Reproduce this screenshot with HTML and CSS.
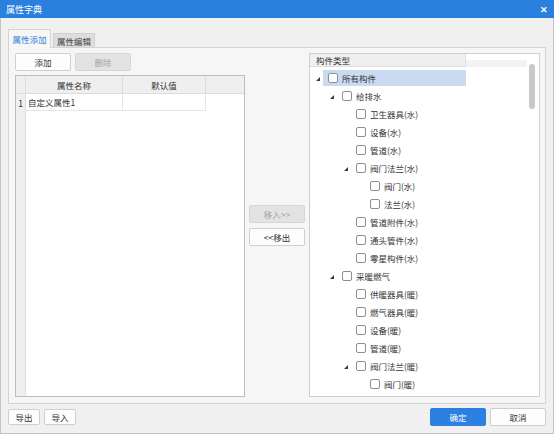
FILE: index.html
```html
<!DOCTYPE html>
<html lang="zh">
<head>
<meta charset="utf-8">
<title>属性字典</title>
<link rel="stylesheet" href="styles.css">
</head>
<body>
<div class="window">
  <div class="titlebar"><span>属性字典</span><span class="close">✕</span></div>
  <div class="frame">
    <div class="tabs">
      <div class="tab active">属性添加</div>
      <div class="tab">属性编辑</div>
    </div>
    <div class="panel">
      <div class="leftcol">
        <div class="btnrow">
          <div class="btn">添加</div>
          <div class="btn disabled">删除</div>
        </div>
        <div class="grid">
          <div class="c rh hd"></div>
          <div class="c hd">属性名称</div>
          <div class="c hd">默认值</div>
          <div class="c hd fill"></div>
          <div class="c rh">1</div>
          <div class="c cell left">自定义属性1</div>
          <div class="c cell"></div>
          <div class="c blank"></div>
          <div class="c rh rest"></div>
          <div class="c blank span3"></div>
        </div>
      </div>
      <div class="midcol">
        <div class="btn disabled mbtn">移入&gt;&gt;</div>
        <div class="btn mbtn">&lt;&lt;移出</div>
      </div>
      <div class="tree">
        <div class="tree-main">
          <div class="tree-head">
            <div class="th-cell">构件类型</div>
            <div class="th-fill"></div>
          </div>
          <div class="list">
            <div class="row lv0"><span class="exp"><i class="tri"></i></span><span class="item sel"><span class="cb"></span>所有构件</span></div>
            <div class="row lv1"><span class="exp"><i class="tri"></i></span><span class="item"><span class="cb"></span>给排水</span></div>
            <div class="row lv2"><span class="exp"></span><span class="item"><span class="cb"></span>卫生器具(水)</span></div>
            <div class="row lv2"><span class="exp"></span><span class="item"><span class="cb"></span>设备(水)</span></div>
            <div class="row lv2"><span class="exp"></span><span class="item"><span class="cb"></span>管道(水)</span></div>
            <div class="row lv2"><span class="exp"><i class="tri"></i></span><span class="item"><span class="cb"></span>阀门法兰(水)</span></div>
            <div class="row lv3"><span class="exp"></span><span class="item"><span class="cb"></span>阀门(水)</span></div>
            <div class="row lv3"><span class="exp"></span><span class="item"><span class="cb"></span>法兰(水)</span></div>
            <div class="row lv2"><span class="exp"></span><span class="item"><span class="cb"></span>管道附件(水)</span></div>
            <div class="row lv2"><span class="exp"></span><span class="item"><span class="cb"></span>通头管件(水)</span></div>
            <div class="row lv2"><span class="exp"></span><span class="item"><span class="cb"></span>零星构件(水)</span></div>
            <div class="row lv1"><span class="exp"><i class="tri"></i></span><span class="item"><span class="cb"></span>采暖燃气</span></div>
            <div class="row lv2"><span class="exp"></span><span class="item"><span class="cb"></span>供暖器具(暖)</span></div>
            <div class="row lv2"><span class="exp"></span><span class="item"><span class="cb"></span>燃气器具(暖)</span></div>
            <div class="row lv2"><span class="exp"></span><span class="item"><span class="cb"></span>设备(暖)</span></div>
            <div class="row lv2"><span class="exp"></span><span class="item"><span class="cb"></span>管道(暖)</span></div>
            <div class="row lv2"><span class="exp"><i class="tri"></i></span><span class="item"><span class="cb"></span>阀门法兰(暖)</span></div>
            <div class="row lv3"><span class="exp"></span><span class="item"><span class="cb"></span>阀门(暖)</span></div>
          </div>
        </div>
        <div class="track"><div class="thumb"></div></div>
      </div>
    </div>
    <div class="footer">
      <div class="fgroup">
        <div class="btn small">导出</div>
        <div class="btn small">导入</div>
      </div>
      <div class="fgroup">
        <div class="btn big primary">确定</div>
        <div class="btn big">取消</div>
      </div>
    </div>
  </div>
</div>
</body>
</html>
```
FILE: styles.css
```css
* { box-sizing: border-box; }
html, body { margin: 0; padding: 0; }
body {
  width: 554px;
  height: 434px;
  overflow: hidden;
  background: #f0f0f0;
  font-family: "Noto Sans CJK SC", "Microsoft YaHei", sans-serif;
  font-size: 8.5px;
  color: #333;
}
.window { display: flex; flex-direction: column; height: 434px; }
.titlebar {
  height: 18px;
  flex: none;
  background: #2b7fdd;
  color: #fff;
  font-size: 9px;
  display: flex;
  align-items: center;
  justify-content: space-between;
  padding: 0 6px 0 6px;
}
.close { font-size: 9px; font-weight: bold; }
.frame {
  flex: 1;
  border: 1px solid #c4c4c4;
  border-top: none;
  padding: 11px 7px 0 7px;
  display: flex;
  flex-direction: column;
}
.tabs { display: flex; height: 18px; align-items: flex-end; }
.tab {
  height: 14px;
  width: 42px;
  margin-left: 2px;
  background: #dedede;
  border: 1px solid #d0d0d0;
  border-bottom: none;
  display: flex;
  align-items: center;
  justify-content: center;
  color: #444;
}
.tab.active {
  margin-left: 0;
  width: 43px;
  height: 19px;
  margin-bottom: -1px;
  background: #f6f6f6;
  border-color: #d4d4d4;
  color: #2f80db;
  position: relative;
  z-index: 1;
}
.panel {
  height: 357px;
  background: #f6f6f6;
  border: 1px solid #d4d4d4;
  padding: 5px 5px 6px 6px;
  display: flex;
}
.leftcol { width: 230px; display: flex; flex-direction: column; gap: 4px; }
.btnrow { display: flex; gap: 4px; height: 18px; }
.btn {
  background: #fdfdfd;
  border: 1px solid #cfcfcf;
  border-radius: 2px;
  display: flex;
  align-items: center;
  justify-content: center;
  width: 56px;
  height: 18px;
  color: #333;
}
.btn.disabled { background: #e3e3e3; border-color: #d6d6d6; color: #a3a3a3; }
.grid {
  flex: 1;
  border: 1px solid #bcbcbc;
  background: #fff;
  display: grid;
  grid-template-columns: 10px 97px 83px 1fr;
  grid-template-rows: 18px 17px 1fr;
}
.c { display: flex; align-items: center; justify-content: center; }
.hd { background: #efefef; border-right: 1px solid #dcdcdc; border-bottom: 1px solid #dcdcdc; }
.hd.fill { border-right: none; }
.rh { background: #efefef; border-right: 1px solid #dedede; }
.rh.hd { border-bottom: 1px solid #dcdcdc; }
.cell { border-right: 1px solid #e6e6e6; border-bottom: 1px solid #e6e6e6; }
.cell.left { justify-content: flex-start; padding-left: 2px; }
.span3 { grid-column: span 3; }
.midcol {
  width: 64px;
  display: flex;
  flex-direction: column;
  justify-content: center;
  gap: 5px;
  padding-left: 4px;
  padding-top: 1px;
}
.mbtn { width: 56px; height: 18px; }
.tree {
  width: 231px;
  background: #fff;
  border: 1px solid #cfcfcf;
  display: flex;
  overflow: hidden;
}
.tree-main { flex: 1; display: flex; flex-direction: column; }
.tree-head { display: flex; height: 13px; flex: none; }
.th-cell {
  width: 156px;
  background: #efefef;
  border-right: 1px solid #e0e0e0;
  border-bottom: 1px solid #e0e0e0;
  padding-left: 6px;
  display: flex;
  align-items: center;
}
.th-fill { flex: 1; align-self: flex-end; height: 7px; background: #f3f3f3; }
.list { padding-top: 3px; }
.row { display: flex; height: 16px; margin-bottom: 2px; align-items: center; }
.lv0 { padding-left: 6px; }
.lv1 { padding-left: 20px; }
.lv2 { padding-left: 34px; }
.lv3 { padding-left: 48px; }
.exp { width: 7px; height: 16px; display: flex; align-items: center; }
.tri {
  display: block;
  width: 0;
  height: 0;
  border-left: 4px solid transparent;
  border-bottom: 4px solid #3a3a3a;
  margin-top: 1px;
}
.item {
  display: flex;
  align-items: center;
  gap: 4px;
  height: 16px;
  padding-left: 5px;
  padding-right: 4px;
}
.item.sel { background: #cadbf1; width: 143px; }
.cb {
  width: 10px;
  height: 10px;
  border: 1px solid #8f8f8f;
  border-radius: 2px;
  background: #fff;
  flex: none;
}
.track { width: 12px; flex: none; padding-top: 10px; padding-left: 2px; }
.thumb { width: 6px; height: 45px; background: #c9c9c9; border-radius: 3px; }
.footer {
  display: flex;
  justify-content: space-between;
  padding-top: 4px;
}
.fgroup { display: flex; gap: 4px; align-items: center; height: 18px; }
.btn.small { width: 32px; height: 16px; }
.btn.big { width: 56px; height: 18px; }
.btn.primary { background: #2b80e0; border-color: #2b80e0; color: #fff; }
```
